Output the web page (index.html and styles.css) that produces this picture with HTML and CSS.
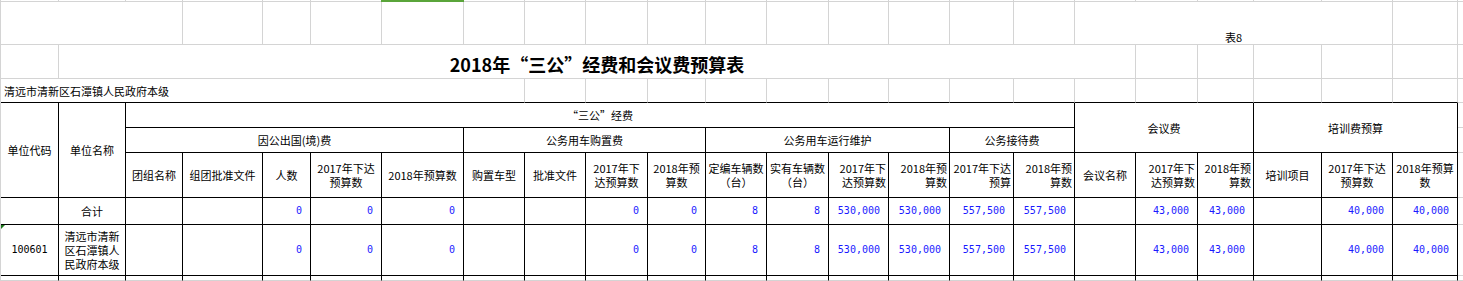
FILE: index.html
```html
<!DOCTYPE html>
<html lang="zh-CN">
<head>
<meta charset="utf-8">
<title>2018年“三公”经费和会议费预算表</title>
<link rel="stylesheet" href="styles.css">
</head>
<body>
<div class="sheet">
  <!-- row 0 -->
  <div class="c"></div><div class="c"></div><div class="c"></div><div class="c"></div><div class="c"></div><div class="c"></div><div class="c sel"></div><div class="c"></div><div class="c"></div><div class="c"></div><div class="c"></div><div class="c"></div><div class="c"></div><div class="c"></div><div class="c"></div><div class="c"></div><div class="c"></div><div class="c"></div><div class="c"></div><div class="c"></div><div class="c"></div><div class="c"></div><div class="c"></div><div class="c"></div>
  <!-- row 1 -->
  <div class="c s3"></div><div class="c"></div><div class="c"></div><div class="c"></div><div class="c"></div><div class="c"></div><div class="c"></div><div class="c"></div><div class="c"></div><div class="c"></div><div class="c"></div><div class="c"></div><div class="c"></div><div class="c"></div><div class="c"></div>
  <div class="c s5 tag">表8</div><div class="c"></div><div class="c"></div>
  <!-- row 2 -->
  <div class="c"></div>
  <div class="c s17 title">2018年<span class="fw">“</span>三公<span class="fw">”</span>经费和会议费预算表</div>
  <div class="c"></div><div class="c"></div><div class="c"></div><div class="c"></div><div class="c"></div><div class="c"></div>
  <!-- row 3 -->
  <div class="c s8 bb unit">清远市清新区石潭镇人民政府本级</div>
  <div class="c bb"></div><div class="c bb"></div><div class="c bb"></div><div class="c bb"></div><div class="c bb"></div><div class="c bb"></div><div class="c bb"></div><div class="c bb"></div><div class="c bb"></div><div class="c bb"></div><div class="c bb"></div><div class="c bb"></div><div class="c bb"></div><div class="c bb"></div><div class="c bb"></div><div class="c"></div>
  <!-- row 4 -->
  <div class="c t r3">单位代码</div>
  <div class="c t r3">单位名称</div>
  <div class="c t s15"><span class="fw">“</span>三公<span class="fw">”</span>经费</div>
  <div class="c t s3 r2">会议费</div>
  <div class="c t s3 r2">培训费预算</div>
  <div class="c"></div>
  <!-- row 5 -->
  <div class="c t s5">因公出国(境)费</div>
  <div class="c t s4">公务用车购置费</div>
  <div class="c t s4">公务用车运行维护</div>
  <div class="c t s2">公务接待费</div>
  <div class="c"></div>
  <!-- row 6 -->
  <div class="c t">团组名称</div>
  <div class="c t">组团批准文件</div>
  <div class="c t">人数</div>
  <div class="c t w">2017年下达<br>预算数</div>
  <div class="c t">2018年预算数</div>
  <div class="c t">购置车型</div>
  <div class="c t">批准文件</div>
  <div class="c t w">2017年下<br>达预算数</div>
  <div class="c t w">2018年预<br>算数</div>
  <div class="c t w">定编车辆数<br>（台）</div>
  <div class="c t w">实有车辆数<br>（台）</div>
  <div class="c t w rt">2017年下<br>达预算数</div>
  <div class="c t w rt">2018年预<br>算数</div>
  <div class="c t w rt">2017年下达<br>预算</div>
  <div class="c t w rt">2018年预<br>算数</div>
  <div class="c t">会议名称</div>
  <div class="c t w rt">2017年下<br>达预算数</div>
  <div class="c t w rt">2018年预<br>算数</div>
  <div class="c t">培训项目</div>
  <div class="c t w">2017年下达<br>预算数</div>
  <div class="c t w">2018年预算<br>数</div>
  <div class="c"></div>
  <!-- row 7 -->
  <div class="c t"></div>
  <div class="c t">合计</div>
  <div class="c t"></div>
  <div class="c t"></div>
  <div class="c t num">0</div>
  <div class="c t num">0</div>
  <div class="c t num">0</div>
  <div class="c t"></div>
  <div class="c t"></div>
  <div class="c t num">0</div>
  <div class="c t num">0</div>
  <div class="c t num">8</div>
  <div class="c t num">8</div>
  <div class="c t num">530,000</div>
  <div class="c t num">530,000</div>
  <div class="c t num">557,500</div>
  <div class="c t num">557,500</div>
  <div class="c t"></div>
  <div class="c t num">43,000</div>
  <div class="c t num">43,000</div>
  <div class="c t"></div>
  <div class="c t num">40,000</div>
  <div class="c t num">40,000</div>
  <div class="c"></div>
  <!-- row 8 -->
  <div class="c t code flag">100601</div>
  <div class="c t w">清远市清新<br>区石潭镇人<br>民政府本级</div>
  <div class="c t"></div>
  <div class="c t"></div>
  <div class="c t num">0</div>
  <div class="c t num">0</div>
  <div class="c t num">0</div>
  <div class="c t"></div>
  <div class="c t"></div>
  <div class="c t num">0</div>
  <div class="c t num">0</div>
  <div class="c t num">8</div>
  <div class="c t num">8</div>
  <div class="c t num">530,000</div>
  <div class="c t num">530,000</div>
  <div class="c t num">557,500</div>
  <div class="c t num">557,500</div>
  <div class="c t"></div>
  <div class="c t num">43,000</div>
  <div class="c t num">43,000</div>
  <div class="c t"></div>
  <div class="c t num">40,000</div>
  <div class="c t num">40,000</div>
  <div class="c"></div>
  <!-- row 9 -->
  <div class="c tv"></div><div class="c tv"></div><div class="c tv"></div><div class="c tv"></div><div class="c tv"></div><div class="c tv"></div><div class="c tv"></div><div class="c tv"></div><div class="c tv"></div><div class="c tv"></div><div class="c tv"></div><div class="c tv"></div><div class="c tv"></div><div class="c tv"></div><div class="c tv"></div><div class="c tv"></div><div class="c tv"></div><div class="c tv"></div><div class="c tv"></div><div class="c tv"></div><div class="c tv"></div><div class="c tv"></div><div class="c tv"></div><div class="c"></div>
</div>
</body>
</html>
```

FILE: styles.css
```css
html, body {
  margin: 0;
  padding: 0;
  background: #ffffff;
  overflow: hidden;
}

body {
  font-family: "Noto Sans CJK SC", "Noto Sans", sans-serif;
  font-size: 11px;
  color: #000000;
}

.sheet {
  display: grid;
  width: max-content;
  border-left: 1px solid #d4d4d4;
  grid-template-columns: 58px 67px 57px 80px 48px 71px 82px 61px 61px 62px 58px 61px 62px 60px 61px 64px 61px 61px 62px 56px 68px 71px 65px 6px;
  grid-template-rows: 2px 43px 34px 24px 25px 25px 45px 27px 51px 5px;
}

.c {
  box-sizing: border-box;
  border-right: 1px solid #d4d4d4;
  border-bottom: 1px solid #d4d4d4;
  display: flex;
  align-items: center;
  justify-content: center;
  text-align: center;
  white-space: nowrap;
  overflow: hidden;
  line-height: 14px;
  min-width: 0;
}

.s2 { grid-column: span 2; }
.s3 { grid-column: span 3; }
.s4 { grid-column: span 4; }
.s5 { grid-column: span 5; }
.s8 { grid-column: span 8; }
.s15 { grid-column: span 15; }
.s17 { grid-column: span 17; }
.r2 { grid-row: span 2; }
.r3 { grid-row: span 3; }

.t {
  border-right-color: #000000;
  border-bottom-color: #000000;
}

.tv {
  border-right-color: #000000;
}

.bb {
  border-bottom-color: #000000;
}

.fw {
  font-feature-settings: "fwid" 1;
}

.sel {
  position: relative;
  overflow: visible;
}

.sel::after {
  content: "";
  position: absolute;
  left: -1px;
  right: -1px;
  top: 0;
  height: 2px;
  background: #5aa53a;
}

.tag {
  align-items: flex-end;
  padding-bottom: 0;
}

.title {
  font-size: 18px;
  font-weight: bold;
  line-height: 20px;
  padding-top: 4px;
}

.unit {
  justify-content: flex-start;
  padding-left: 3px;
}

.w {
  line-height: 14px;
}

.rt {
  justify-content: flex-end;
  text-align: right;
  padding-right: 2px;
}

.num {
  justify-content: flex-end;
  padding-right: 8px;
  color: #1a1aff;
  font-family: "DejaVu Sans Mono", "Liberation Mono", monospace;
  font-size: 10px;
}

.code {
  font-family: "DejaVu Sans Mono", "Liberation Mono", monospace;
  font-size: 10px;
}

.flag {
  position: relative;
}

.flag::before {
  content: "";
  position: absolute;
  left: 0;
  top: -1px;
  width: 0;
  height: 0;
  border-top: 5px solid #1e7a1e;
  border-right: 5px solid transparent;
}
```
